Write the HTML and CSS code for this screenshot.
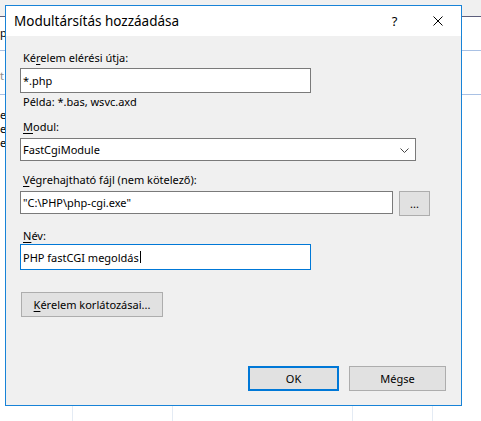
FILE: index.html
```html
<!DOCTYPE html>
<html lang="hu">
<head>
<meta charset="utf-8">
<title>Modultársítás hozzáadása</title>
<link rel="stylesheet" href="styles.css">
</head>
<body>
<div class="desktop">
  <div class="topband"></div>
  <div class="bg-row r1"><span class="frag">p</span></div>
  <div class="bg-row r2"><span class="frag dim">t</span></div>
  <div class="grid">
    <div class="gcol g1">
      <span class="frag">e</span>
      <span class="frag">e</span>
      <span class="frag">e</span>
    </div>
    <div class="gcol g2"></div>
    <div class="gcol g3"></div>
    <div class="gcol g4"></div>
    <div class="gcol g5"></div>
  </div>
</div>

<div class="dialog">
  <div class="titlebar">
    <span class="title">Modultársítás hozzáadása</span>
    <span class="ctl help">?</span>
    <span class="ctl close">
      <svg width="10" height="10" viewBox="0 0 10 10"><path d="M0.5 0.5 L9.5 9.5 M9.5 0.5 L0.5 9.5" stroke="#000" stroke-width="1" fill="none"/></svg>
    </span>
  </div>
  <div class="body">
    <div class="lbl">Ké<u>r</u>elem elérési útja:</div>
    <div class="input in1">*.php</div>
    <div class="lbl hint">Példa: *.bas, wsvc.axd</div>
    <div class="lbl lmod"><u>M</u>odul:</div>
    <div class="input select">
      <span class="val">FastCgiModule</span>
      <svg class="chev" width="9" height="5" viewBox="0 0 9 5"><path d="M0.5 0.5 L4.5 4.5 L8.5 0.5" stroke="#444" stroke-width="1" fill="none"/></svg>
    </div>
    <div class="lbl lexe"><u>V</u>égrehajtható fájl (nem kötelező):</div>
    <div class="exe-row">
      <div class="input in3">"C:\PHP\php-cgi.exe"</div>
      <div class="btn dots">...</div>
    </div>
    <div class="lbl lname"><u>N</u>év:</div>
    <div class="input in4 focus">PHP fastCGI megoldás<span class="caret"></span></div>
    <div class="btn restrict"><u>K</u>érelem korlátozásai...</div>
    <div class="footer">
      <div class="btn ok">OK</div>
      <div class="btn cancel">Mégse</div>
    </div>
  </div>
</div>
</body>
</html>
```
FILE: styles.css
```css
* { box-sizing: border-box; }
html, body { margin: 0; padding: 0; }
body {
  width: 481px;
  height: 421px;
  overflow: hidden;
  background: #ffffff;
  font-family: "Noto Sans", "Open Sans", sans-serif;
  color: #000;
  position: relative;
}
u { text-decoration: underline; text-underline-offset: 2px; }

/* background window */
.desktop {
  width: 481px;
  height: 421px;
  overflow: hidden;
  display: flex;
  flex-direction: column;
  font-size: 11px;
  line-height: 14px;
}
.topband {
  height: 17px;
  flex: none;
  background: #f0f0f0;
  border-bottom: 1px solid #5c5e7c;
}
.frag { display: block; padding-left: 0; }
.dim { color: #8a8a8a; }
.bg-row { flex: none; border-bottom: 1px solid #a9c1e4; }
.r1 { height: 34px; padding-top: 9px; }
.r2 { height: 44px; padding-top: 18px; }
.grid { flex: 1; display: flex; }
.gcol { border-right: 1px solid #e4ebf4; }
.g1 { width: 73px; padding-top: 13px; }
.g2 { width: 100px; }
.g3 { width: 180px; }
.g4 { width: 80px; }
.g5 { flex: 1; border-right: none; }

/* dialog window */
.dialog {
  position: absolute;
  left: 5px;
  top: 5px;
  width: 457px;
  height: 401px;
  border: 1px solid #1883d7;
  background: #f0f0f0;
  display: flex;
  flex-direction: column;
}
.titlebar {
  height: 30px;
  background: #fff;
  display: flex;
  align-items: center;
  padding-left: 8px;
}
.title { flex: 1; font-size: 13.5px; }
.ctl {
  width: 46px;
  height: 30px;
  display: flex;
  align-items: center;
  justify-content: center;
}
.help { font-size: 13px; padding-left: 5px; }

.body {
  flex: 1;
  display: flex;
  flex-direction: column;
  align-items: flex-start;
  padding: 14px 15px 14px 14px;
  font-size: 11px;
}
.lbl { height: 15px; line-height: 15px; padding-left: 3px; white-space: nowrap; }
.input {
  background: #fff;
  border: 1px solid #7a7a7a;
  display: flex;
  align-items: center;
  padding-left: 2px;
  line-height: 15px;
  white-space: nowrap;
}
.in1 { width: 291px; height: 25px; margin-top: 3px; }
.hint { margin-top: 1px; }
.lmod { margin-top: 10px; }
.select { width: 396px; height: 23px; margin-top: 4px; justify-content: space-between; padding-right: 6px; }
.chev { margin-top: 1px; }
.lexe { margin-top: 11px; }
.exe-row { display: flex; gap: 6px; margin-top: 4px; align-items: flex-start; }
.in3 { width: 373px; height: 23px; }
.lname { margin-top: 12px; }
.in4 { width: 291px; height: 26px; margin-top: 1px; }
.focus { border-color: #0078d7; }
.caret { display: inline-block; width: 1px; height: 12px; background: #000; margin-left: 1px; }

.btn {
  background: #e1e1e1;
  border: 1px solid #adadad;
  display: flex;
  align-items: center;
  justify-content: center;
  line-height: 15px;
  white-space: nowrap;
}
.dots { width: 31px; height: 25px; }
.restrict { width: 142px; height: 25px; margin-top: 22px; margin-left: 1px; }
.footer {
  margin-top: auto;
  align-self: stretch;
  display: flex;
  justify-content: flex-end;
  gap: 10px;
}
.ok { width: 91px; height: 25px; border: 2px solid #0078d7; }
.cancel { width: 97px; height: 25px; }
```
